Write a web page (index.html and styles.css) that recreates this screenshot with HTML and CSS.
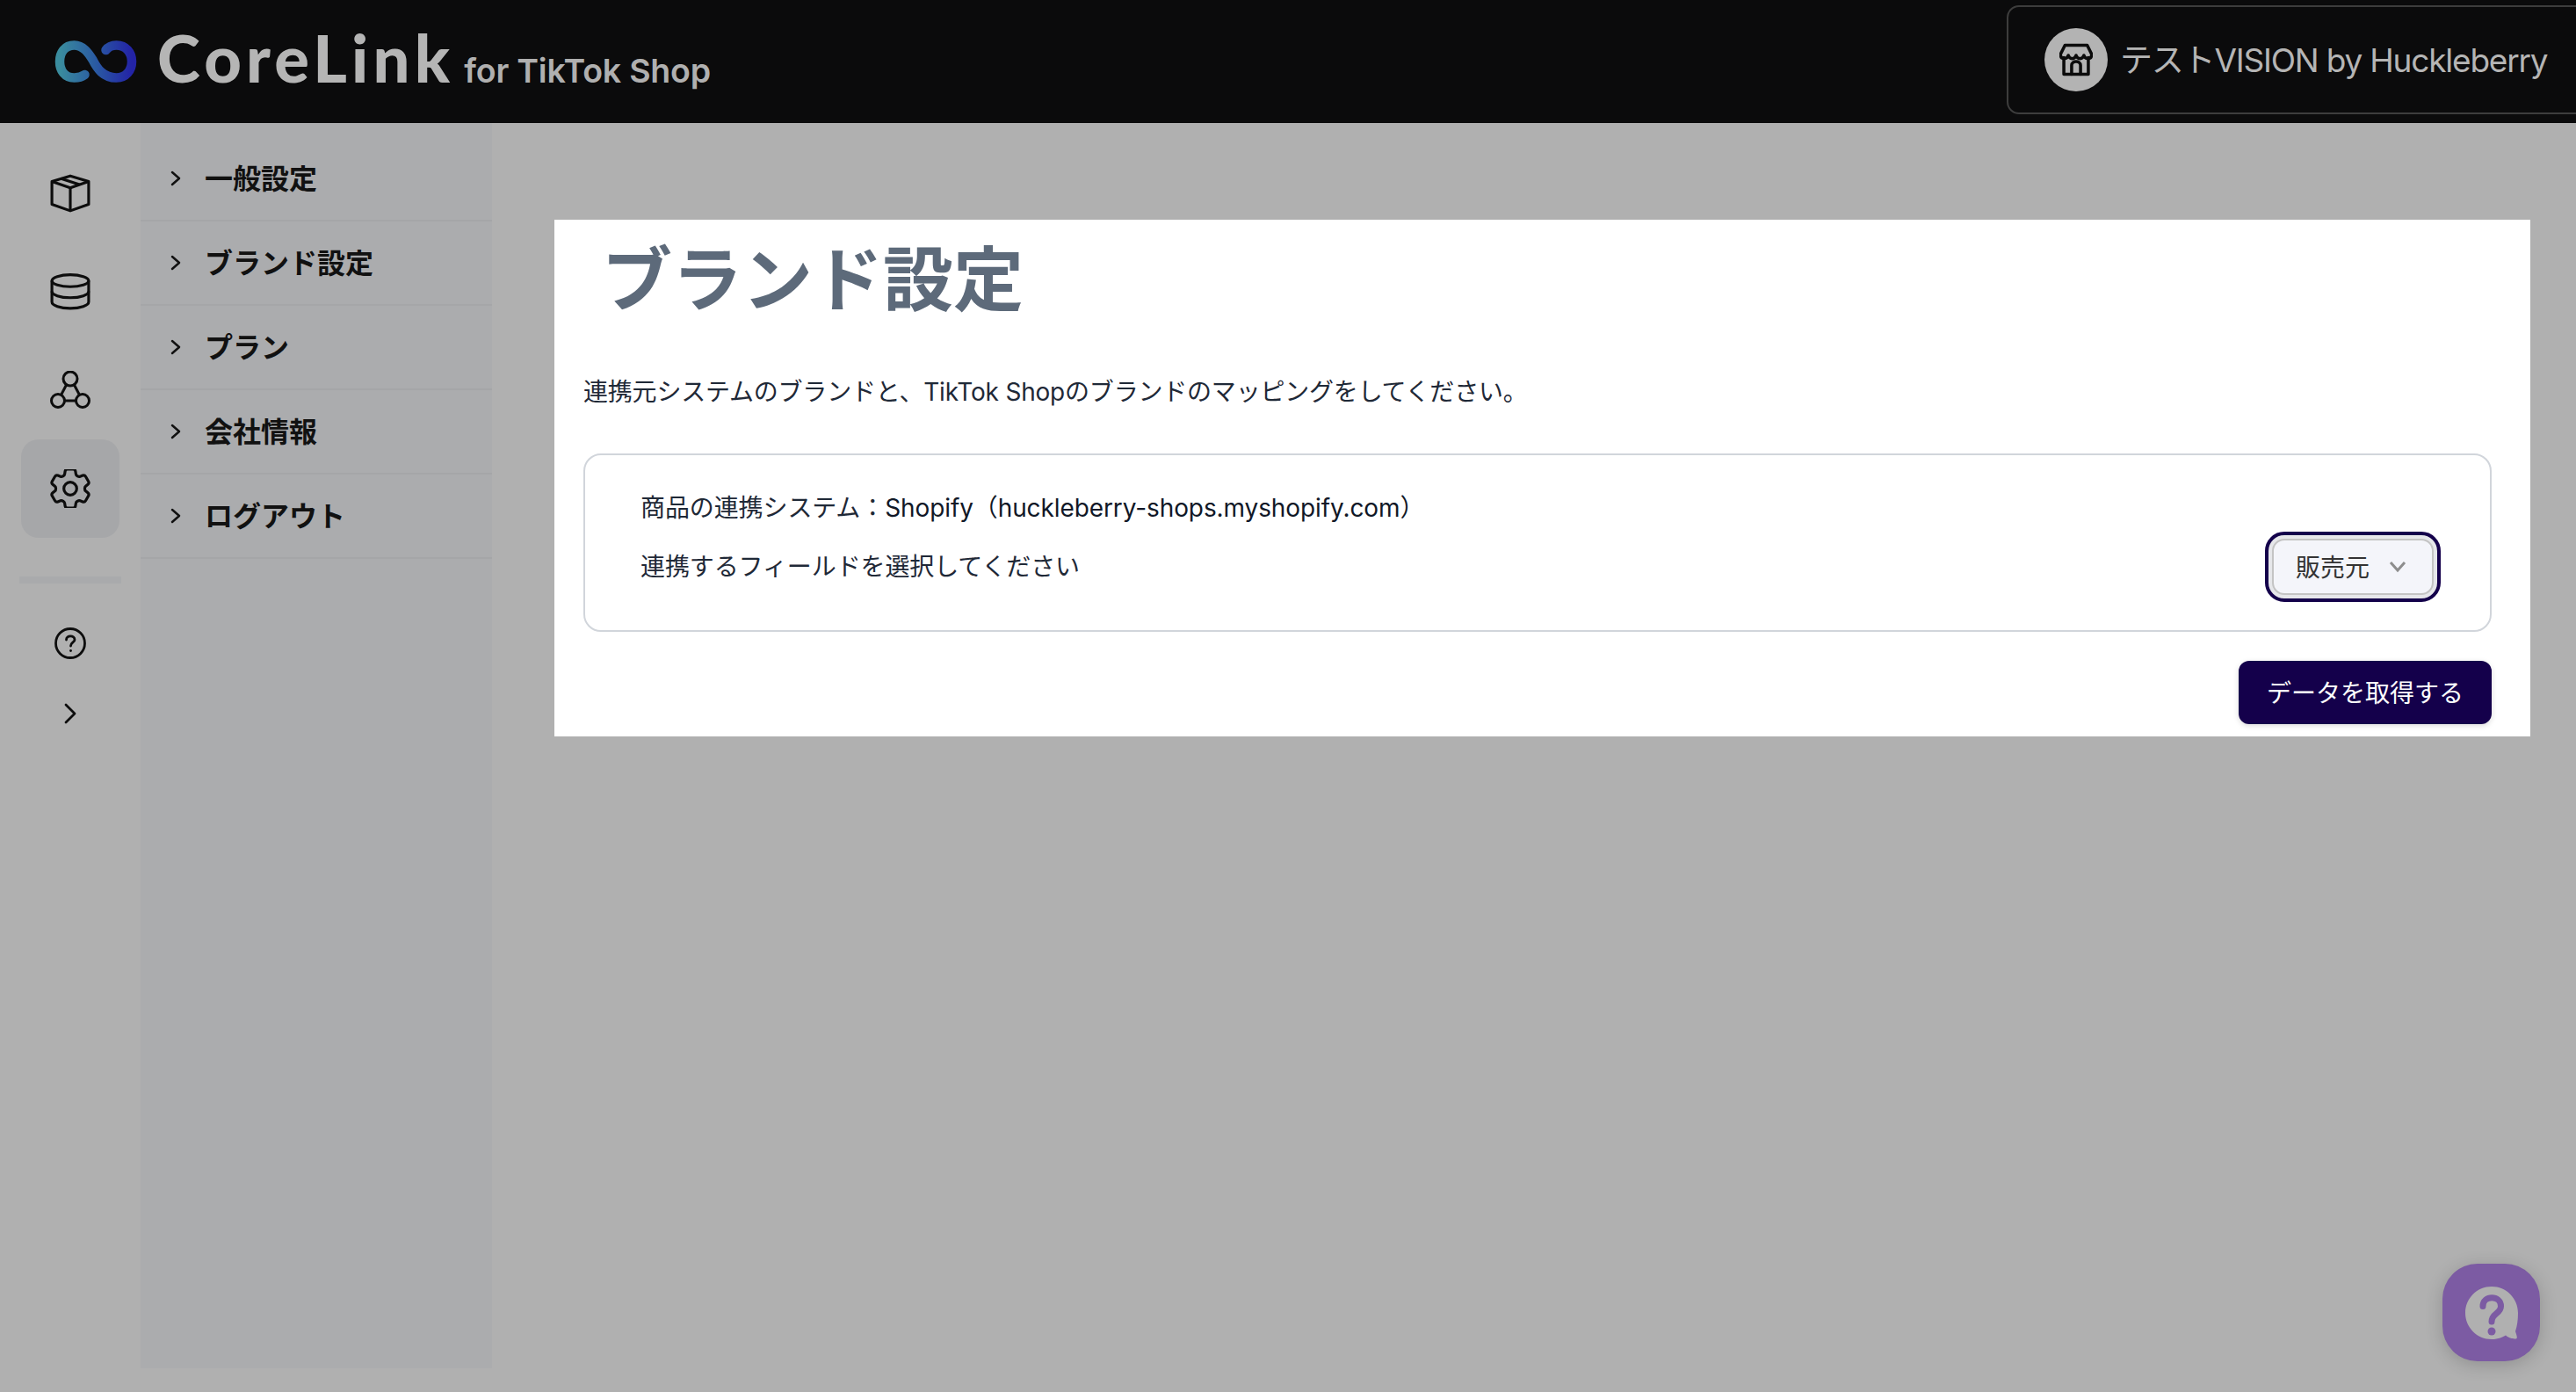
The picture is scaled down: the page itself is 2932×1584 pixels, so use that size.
FILE: index.html
```html
<!DOCTYPE html>
<html lang="ja">

<head>
    <meta charset="UTF-8">
    <title>ブランド設定 | CoreLink</title>
    <link rel="stylesheet" href="styles.css">
</head>

<body>
    <!-- Top bar -->
    <header class="topbar">
        <div class="logo">
            <svg class="logo-mark" viewBox="0 0 93 48" fill="none">
                <defs>
                    <linearGradient id="logoGrad" x1="0" y1="0" x2="1" y2="0">
                        <stop offset="0" stop-color="#3a8c9e"/>
                        <stop offset="0.5" stop-color="#2a5aa2"/>
                        <stop offset="1" stop-color="#2323a6"/>
                    </linearGradient>
                </defs>
                <path d="M34 39C30 42 27 42.5 22 42.5C11 42.5 5.5 34 5.5 24C5.5 14 11 5.5 22 5.5C32 5.5 38 14 43 22C48 32 55 42.5 70 42.5C81 42.5 87.5 34 87.5 24C87.5 14 81 5.5 70 5.5C65 5.5 61 7 58 11" stroke="url(#logoGrad)" stroke-width="10.5" stroke-linecap="round"/>
            </svg>
            <span class="logo-name">CoreLink</span>
            <span class="logo-sub">for TikTok Shop</span>
        </div>
        <div class="shop-box">
            <span class="shop-icon">
                <svg viewBox="3 3 30 30" fill="none" stroke="#0b0b0b" stroke-width="2.800" stroke-linejoin="round" stroke-linecap="round">
                    <path d="M7 16V31H29V16"/>
                    <path d="M8 5H28L32 13C32 18 26 18 25 14C24 18 19 18 18 14C17 18 12 18 11 14C10 18 4 18 4 13Z"/>
                    <path d="M14 31V23C14 18.500 22 18.500 22 23V31"/>
                </svg>
            </span>
            <span class="shop-name">テストVISION by Huckleberry</span>
        </div>
    </header>

    <div class="layout">
        <!-- Icon rail -->
        <nav class="rail">
            <a class="rail-item">
                <svg class="rail-icon" viewBox="0 0 44 42" fill="none" stroke="#0d0d0d" stroke-width="3" stroke-linejoin="round">
                    <path d="M22 2L42 8V33L22 40L2 33V8Z"/>
                    <path d="M2 8L22 15L42 8"/>
                    <path d="M22 15V40"/>
                    <path d="M12 5L32 11.500"/>
                </svg>
            </a>
            <a class="rail-item">
                <svg class="rail-icon" viewBox="0 0 44 40" fill="none" stroke="#0d0d0d" stroke-width="3">
                    <ellipse cx="22" cy="8" rx="20" ry="6.500"/>
                    <path d="M2 8V31C2 35 11 38 22 38C33 38 42 35 42 31V8"/>
                    <path d="M2 19.500C2 23.500 11 26.500 22 26.500C33 26.500 42 23.500 42 19.500"/>
                </svg>
            </a>
            <a class="rail-item">
                <svg class="rail-icon" viewBox="0 0 46 44" fill="none" stroke="#0d0d0d" stroke-width="3">
                    <circle cx="23" cy="9" r="8"/>
                    <circle cx="9" cy="34" r="7.500"/>
                    <circle cx="37" cy="34" r="7.500"/>
                    <path d="M18.500 16L12.500 27.500"/>
                    <path d="M27.500 16L33.500 27.500"/>
                    <path d="M16.500 34H29.500"/>
                </svg>
            </a>
            <a class="rail-item is-active">
                <svg class="rail-icon" viewBox="3 3 18 18" fill="none" stroke="#0d0d0d" stroke-width="1.300">
                    <path d="M9.594 3.94c.09-.542.56-.94 1.11-.94h2.593c.55 0 1.02.398 1.11.94l.213 1.281c.063.374.313.686.645.87.074.04.147.083.22.127.324.196.72.257 1.075.124l1.217-.456a1.125 1.125 0 011.37.49l1.296 2.247a1.125 1.125 0 01-.26 1.431l-1.003.827c-.293.24-.438.613-.431.992a6.759 6.759 0 010 .255c-.007.378.138.75.43.99l1.005.828c.424.35.534.954.26 1.43l-1.298 2.247a1.125 1.125 0 01-1.369.491l-1.217-.456c-.355-.133-.75-.072-1.076.124a6.57 6.57 0 01-.22.128c-.331.183-.581.495-.644.869l-.213 1.28c-.09.543-.56.941-1.11.941h-2.594c-.55 0-1.02-.398-1.11-.94l-.213-1.281c-.062-.374-.312-.686-.644-.87a6.52 6.52 0 01-.22-.127c-.325-.196-.72-.257-1.076-.124l-1.217.456a1.125 1.125 0 01-1.369-.49l-1.297-2.247a1.125 1.125 0 01.26-1.431l1.004-.827c.292-.24.437-.613.43-.992a6.932 6.932 0 010-.255c.007-.378-.138-.75-.43-.99l-1.004-.828a1.125 1.125 0 01-.26-1.43l1.297-2.247a1.125 1.125 0 011.37-.491l1.216.456c.356.133.751.072 1.076-.124.072-.044.146-.087.22-.128.332-.183.582-.495.645-.869l.213-1.281z"/>
                    <circle cx="12" cy="12" r="3"/>
                </svg>
            </a>
            <div class="rail-divider"></div>
            <a class="rail-small">
                <svg class="help-icon" viewBox="0 0 36 36" fill="none" stroke="#0d0d0d" stroke-width="2.800" stroke-linecap="round">
                    <circle cx="18" cy="18" r="16.500"/>
                    <path d="M13.500 14C13.500 8.500 23 8.500 23 14C23 17 18.500 17 18.500 21"/>
                    <path d="M18.500 26.500V26.600"/>
                </svg>
            </a>
            <a class="rail-small rail-toggle">
                <svg class="toggle-icon" viewBox="0 0 14 24" fill="none" stroke="#0d0d0d" stroke-width="2.800" stroke-linecap="round" stroke-linejoin="round">
                    <path d="M2 2L12 12L2 22"/>
                </svg>
            </a>
        </nav>

        <!-- Settings sub menu -->
        <aside class="submenu">
            <a class="submenu-item"><svg class="chev" viewBox="0 0 12 18"><path d="M2 2L10 9L2 16"/></svg><span>一般設定</span></a>
            <a class="submenu-item"><svg class="chev" viewBox="0 0 12 18"><path d="M2 2L10 9L2 16"/></svg><span>ブランド設定</span></a>
            <a class="submenu-item"><svg class="chev" viewBox="0 0 12 18"><path d="M2 2L10 9L2 16"/></svg><span>プラン</span></a>
            <a class="submenu-item"><svg class="chev" viewBox="0 0 12 18"><path d="M2 2L10 9L2 16"/></svg><span>会社情報</span></a>
            <a class="submenu-item"><svg class="chev" viewBox="0 0 12 18"><path d="M2 2L10 9L2 16"/></svg><span>ログアウト</span></a>
        </aside>

        <!-- Main content -->
        <main class="main">
            <section class="card">
                <h1 class="card-title">ブランド設定</h1>
                <p class="card-desc">連携元システムのブランドと、TikTok Shopのブランドのマッピングをしてください。</p>
                <div class="mapping-box">
                    <p class="mapping-line">商品の連携システム：<span class="mapping-value">Shopify（huckleberry-shops.myshopify.com）</span></p>
                    <div class="mapping-row">
                        <p class="mapping-line">連携するフィールドを選択してください</p>
                        <div class="select-ring">
                            <div class="select-box">
                                <span>販売元</span>
                                <svg class="select-chev" viewBox="0 0 20 14"><path d="M2 2L10 11L18 2"/></svg>
                            </div>
                        </div>
                    </div>
                </div>
                <div class="card-actions">
                    <button class="fetch-btn">データを取得する</button>
                </div>
            </section>
        </main>
    </div>

    <!-- Help chat button -->
    <a class="chat-btn">
        <svg class="chat-icon" viewBox="0 0 60 60" fill="none">
            <path d="M30 0C13.400 0 0 13.400 0 30C0 46.600 13.400 60 30 60C38 60 42.500 57.500 46 55.500C50 59 54 59.500 57.500 59.500C60 59.500 58.500 55.500 57 51C59 45 60 38 60 30C60 13.400 46.600 0 30 0Z" fill="#b0b0b0"/>
            <path d="M20 22.500C20 9.500 40.500 9.500 40.500 22.500C40.500 31 30 30 30 40" stroke="#7c5ba3" stroke-width="7" stroke-linecap="round"/>
            <circle cx="30" cy="51" r="4.500" fill="#7c5ba3"/>
        </svg>
    </a>
</body>

</html>
```

FILE: styles.css
```css
* {
    box-sizing: border-box;
}

html,
body {
    height: 100%;
}

body {
    margin: 0;
    overflow: hidden;
    background-color: #b0b0b0;
    color: #111;
    font-family: Inter, "Noto Sans CJK JP", sans-serif;
}

p,
h1 {
    margin: 0;
}

/* Top bar */
.topbar {
    display: flex;
    align-items: center;
    justify-content: space-between;
    height: 140px;
    padding-left: 62px;
    background-color: #0b0b0c;
}

.logo {
    display: flex;
    align-items: baseline;
    margin-bottom: 9px;
}

.logo-mark {
    align-self: center;
    width: 94px;
    height: 48px;
    margin-top: 9px;
    margin-right: 23px;
}

.logo-name {
    font-family: Lato, sans-serif;
    font-size: 74px;
    font-weight: 900;
    letter-spacing: 5.2px;
    color: #b5b5b5;
}

.logo-sub {
    margin-left: 11px;
    font-family: Inter, sans-serif;
    font-size: 37.5px;
    font-weight: 600;
    letter-spacing: -0.2px;
    color: #b0b0b0;
}

.shop-box {
    display: flex;
    flex-shrink: 0;
    align-items: center;
    gap: 14px;
    width: 708px;
    height: 124px;
    margin-right: -60px;
    margin-bottom: 5px;
    padding-left: 41px;
    border: 2px solid #3d3d3d;
    border-radius: 14px;
}

.shop-icon {
    display: flex;
    align-items: center;
    justify-content: center;
    width: 72px;
    height: 72px;
    border-radius: 50%;
    background-color: #b3b3b3;
}

.shop-icon svg {
    width: 38px;
    height: 38px;
}

.shop-name {
    padding-bottom: 4px;
    font-size: 37px;
    letter-spacing: -1.2px;
    color: #b5b5b5;
    white-space: nowrap;
}

/* Layout */
.layout {
    display: flex;
    height: 1444px;
}

/* Icon rail */
.rail {
    display: flex;
    flex-direction: column;
    align-items: center;
    flex: 0 0 160px;
    padding-top: 24px;
}

.rail-item {
    display: flex;
    align-items: center;
    justify-content: center;
    width: 112px;
    height: 112px;
    border-radius: 20px;
}

.rail-item.is-active {
    background-color: #a6a7a9;
}

.rail-icon {
    width: 46px;
    height: 44px;
}

.rail-divider {
    width: 116px;
    height: 8px;
    margin: 44px 0 40px;
    background-color: #a9aaac;
}

.rail-small {
    display: flex;
    align-items: center;
    justify-content: center;
    height: 56px;
}

.rail-toggle {
    margin-top: 24px;
}

.help-icon {
    width: 36px;
    height: 36px;
}

.toggle-icon {
    width: 14px;
    height: 24px;
}

/* Sub menu */
.submenu {
    flex: 0 0 400px;
    height: 1417px;
    padding-top: 16px;
    background-color: #abacae;
}

.submenu-item {
    display: flex;
    align-items: center;
    height: 96px;
    padding-left: 34px;
    border-bottom: 2px solid #a5a6a8;
    font-size: 32px;
    font-weight: 700;
    color: #111;
}

.submenu-item span {
    padding-bottom: 4px;
}

.chev {
    width: 12px;
    height: 18px;
    margin-right: 27px;
    fill: none;
    stroke: #111;
    stroke-width: 2.5;
    stroke-linecap: round;
    stroke-linejoin: round;
}

/* Main content */
.main {
    flex: 1;
    padding: 110px 52px 0 71px;
}

.card {
    padding: 0 44px 14px 33px;
    background-color: #fff;
}

.card-title {
    padding: 15px 0 0 21px;
    font-size: 80px;
    font-weight: 700;
    line-height: 106px;
    color: #5d6a7a;
}

.card-desc {
    margin-top: 55px;
    font-size: 28px;
    line-height: 40px;
    letter-spacing: -0.2px;
    color: #1f2937;
}

.mapping-box {
    height: 203px;
    margin-top: 50px;
    padding: 40px 56px 0 63px;
    border: 2px solid #d1d5db;
    border-radius: 20px;
}

.mapping-line {
    font-size: 28px;
    line-height: 40px;
    letter-spacing: -0.1px;
    color: #1f2937;
}

.mapping-value {
    color: #111827;
}

.mapping-row {
    display: flex;
    align-items: center;
    justify-content: space-between;
    margin-top: 27px;
}

.select-ring {
    margin: -20px 0;
    padding: 4px;
    border: 4px solid #14004b;
    border-radius: 22px;
    background-color: #e6e7ea;
}

.select-box {
    display: flex;
    align-items: center;
    gap: 22px;
    width: 184px;
    height: 64px;
    padding-left: 25px;
    border: 2px solid #c4c4c4;
    border-radius: 14px;
    background-color: #f4f5fa;
    font-size: 28px;
    color: #333;
}

.select-box span {
    padding-bottom: 3px;
}

.select-chev {
    width: 20px;
    height: 14px;
    fill: none;
    stroke: #8d8d8d;
    stroke-width: 3;
}

.card-actions {
    display: flex;
    justify-content: flex-end;
    margin-top: 33px;
}

.fetch-btn {
    width: 288px;
    height: 72px;
    padding: 0 0 3px;
    border: none;
    border-radius: 12px;
    background-color: #14004b;
    box-shadow: 0 2px 6px rgba(0, 0, 0, 0.15);
    color: #fff;
    font-family: inherit;
    font-size: 28px;
}

/* Help chat button */
.chat-btn {
    position: absolute;
    right: 41px;
    bottom: 35px;
    display: flex;
    align-items: center;
    justify-content: center;
    width: 111px;
    height: 111px;
    border-radius: 40px;
    background-color: #7c5ba3;
    box-shadow: 0 4px 20px rgba(0, 0, 0, 0.18);
}

.chat-icon {
    width: 60px;
    height: 60px;
}
```
